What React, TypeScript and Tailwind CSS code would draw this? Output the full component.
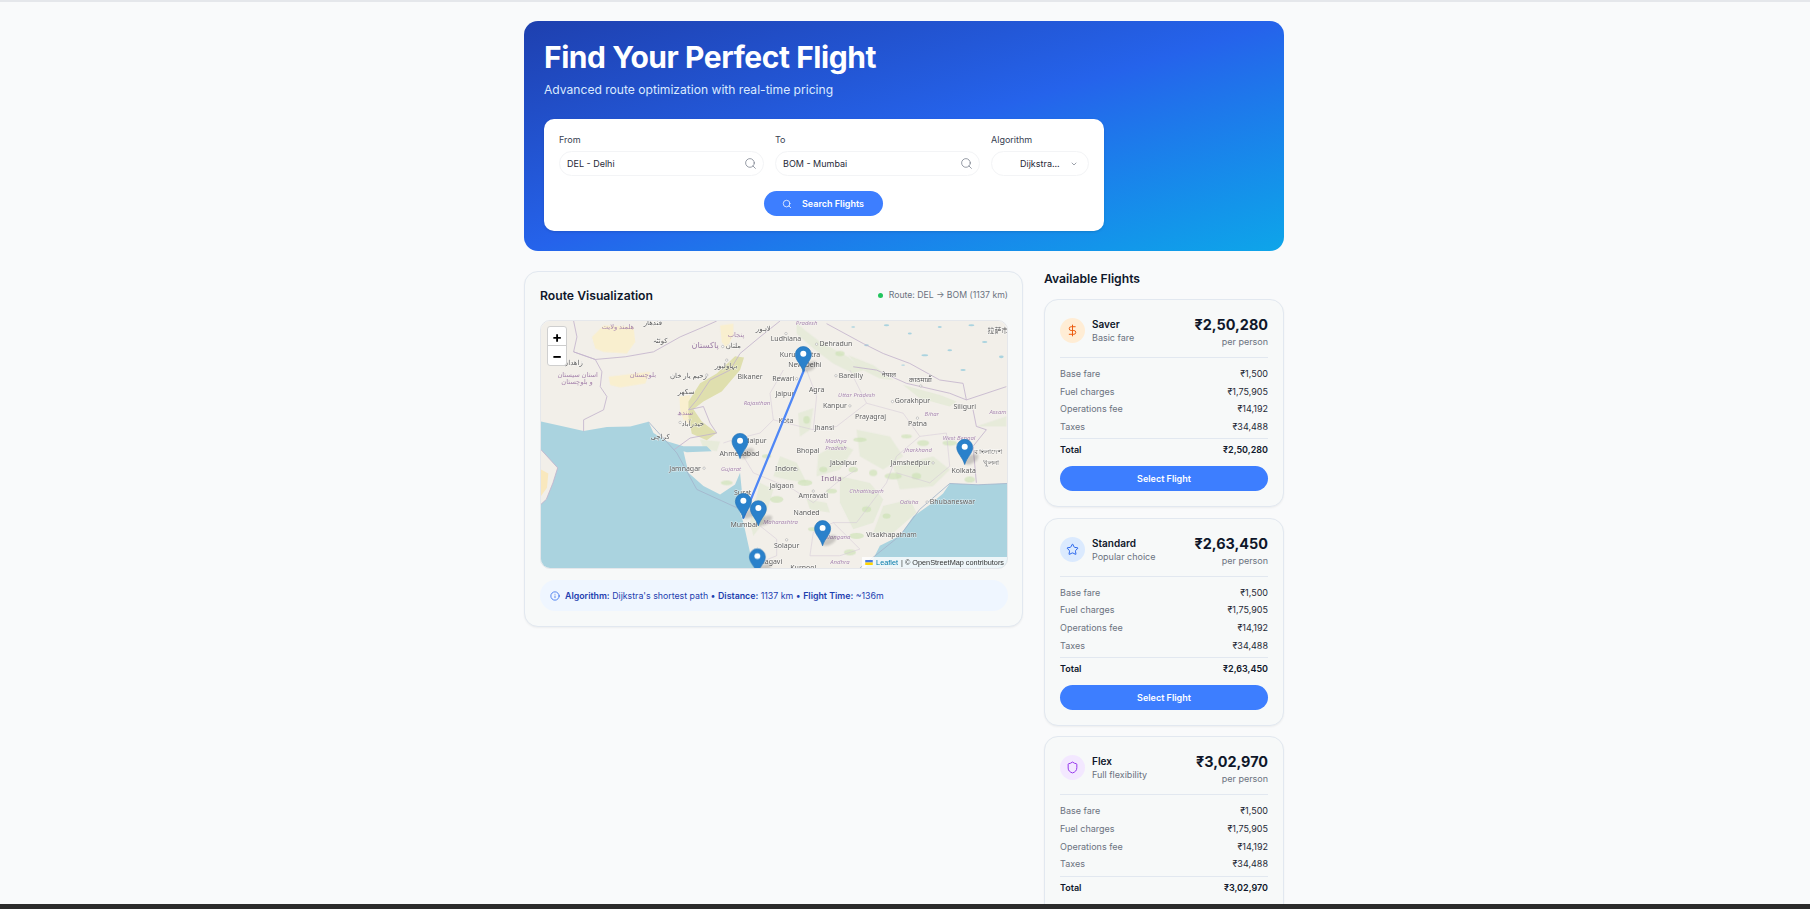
import { ChevronDown, DollarSign, Info, Search, Shield, Star } from "lucide-react";

const fares = [
  { name: "Saver", sub: "Basic fare", price: "₹2,50,280", ops: "₹14,192", taxes: "₹34,488", icon: DollarSign, circle: "bg-[#ffedd5]", color: "text-[#ea580c]" },
  { name: "Standard", sub: "Popular choice", price: "₹2,63,450", ops: "₹14,192", taxes: "₹34,488", icon: Star, circle: "bg-[#dbeafe]", color: "text-[#2563eb]" },
  { name: "Flex", sub: "Full flexibility", price: "₹3,02,970", ops: "₹14,192", taxes: "₹34,488", icon: Shield, circle: "bg-[#f3e8ff]", color: "text-[#9333ea]" },
];

// label coordinates are in the map's viewBox (3 units = 1 screen px)
const cities: [string, number, number][] = [
  ["Ludhiana", 798, 208], ["Dehradun", 948, 222], ["Kurukshetra", 840, 254], ["New Delhi", 855, 286], ["Bikaner", 690, 320],
  ["Rewari", 790, 326], ["Bareilly", 993, 319], ["Agra", 890, 360], ["Jaipur", 795, 373], ["Kanpur", 945, 410],
  ["Gorakhpur", 1178, 395], ["Siliguri", 1335, 412], ["Prayagraj", 1052, 443], ["Patna", 1193, 464], ["Kota", 798, 455],
  ["Jhansi", 913, 476], ["Udaipur", 700, 514], ["Ahmedabad", 658, 555], ["Bhopal", 864, 545], ["Jabalpur", 971, 582],
  ["Jamshedpur", 1172, 582], ["Kolkata", 1332, 605], ["Jamnagar", 495, 598], ["Indore", 798, 600], ["Jalgaon", 785, 649],
  ["Surat", 668, 670], ["Amravati", 880, 681], ["Bhubaneswar", 1298, 698], ["Nanded", 860, 732], ["Mumbai", 672, 767],
  ["Visakhapatnam", 1115, 798], ["Solapur", 800, 830], ["Belagavi", 745, 880], ["Kurnool", 850, 897],
  ["کوئٹہ", 420, 213], ["ملتان", 640, 229], ["بہاولپور", 618, 287], ["زاهدان", 158, 280], ["رحیم یار خان", 505, 318],
  ["سکھر", 498, 368], ["حیدرآباد", 518, 462], ["کراچی", 420, 502], ["لاہور", 730, 177], ["قندهار", 398, 158],
  ["नेपाल", 1107, 315], ["काठमाडौं", 1202, 330], ["拉萨市", 1435, 182], ["বাংলাদেশ", 1405, 548], ["খুলনা", 1415, 580],
];

const regions: [string, number, number][] = [
  ["Rajasthan", 711, 400], ["Uttar Pradesh", 1010, 375], ["Bihar", 1236, 435], ["Assam", 1435, 428], ["West Bengal", 1318, 505],
  ["Jharkhand", 1195, 542], ["Madhya", 948, 514], ["Pradesh", 948, 536], ["Gujarat", 633, 600], ["Chhattisgarh", 1040, 665],
  ["Odisha", 1168, 700], ["Maharashtra", 782, 760], ["Telangana", 950, 805], ["Andhra", 960, 880], ["Pradesh", 860, 158],
];

const regionsNative: [string, number, number][] = [
  ["هلمند ولایت", 293, 170], ["بلوچستان", 368, 315], ["استان سیستان", 172, 315], ["و بلوچستان", 170, 338], ["سندھ", 495, 431], ["پنجاب", 648, 195],
];

const dots = [[798, 190], [890, 222], [948, 317], [830, 326], [990, 408], [1118, 395], [1203, 348], [1193, 445], [1240, 580], [1222, 698], [830, 600], [552, 596], [880, 665], [800, 812], [480, 458], [560, 315], [620, 270], [608, 229], [100, 260]];

const greens = [
  "M830 160 L900 215 L985 260 L1030 300 L1000 310 L940 280 L880 235 L830 190Z",
  "M985 255 L1060 285 L1120 330 L1080 325 L1020 295Z",
  "M1150 345 L1260 375 L1310 395 L1290 410 L1200 385Z",
  "M835 430 L880 415 L870 480 L840 500Z",
  "M895 555 L960 520 L1000 540 L960 600 L890 620Z",
  "M1010 480 L1110 500 L1150 560 L1090 600 L1020 560Z",
  "M960 620 L1050 640 L1090 690 L1060 760 L1000 780 L960 700Z",
  "M1120 590 L1240 560 L1290 600 L1240 650 L1140 660Z",
  "M1090 710 L1170 690 L1190 730 L1120 790 L1060 790Z",
  "M720 640 L760 660 L730 760 L700 800 L690 760Z",
  "M540 510 L600 515 L590 545 L550 535Z",
  "M780 560 L830 580 L860 640 L800 630 L760 620Z",
  "M1370 470 L1460 440 L1460 470 L1400 470Z",
  "M860 690 L920 700 L930 730 L870 720Z",
];

const blobs = [[1120, 620, 26, 10], [1020, 510, 20, 7], [855, 640, 22, 9], [935, 665, 16, 7], [1210, 520, 18, 9], [1290, 520, 22, 8], [770, 690, 20, 10], [1010, 800, 22, 9], [990, 850, 18, 9], [880, 780, 16, 6], [620, 640, 18, 7], [1350, 630, 16, 9], [1160, 500, 16, 6], [740, 560, 14, 6], [1000, 600, 14, 8], [1060, 610, 12, 10], [1190, 620, 14, 10], [1040, 720, 14, 9], [910, 600, 12, 8], [860, 450, 10, 12], [1100, 740, 12, 8], [960, 250, 14, 8]];

const lakes = [[1100, 165, 8, 3], [1170, 190, 6, 3], [1215, 255, 10, 3], [1290, 240, 7, 3], [1355, 165, 9, 3], [1395, 215, 8, 3], [1260, 170, 6, 3], [1445, 260, 7, 4], [1040, 225, 7, 3], [1000, 170, 6, 2], [1150, 285, 6, 2], [1330, 300, 8, 3]];

const pins: [number, number][] = [[660, 567], [850, 305], [1335, 585], [908, 830], [670, 748], [715, 770], [712, 915]];

function MapCanvas() {
  return (
    <svg viewBox="62 152 1400 745" className="block w-full h-full blur-[0.35px]" preserveAspectRatio="none" fontFamily="'Noto Sans','DejaVu Sans','Noto Sans CJK SC',sans-serif">
      <rect x="62" y="152" width="1400" height="745" fill="#f2efe9" />
      {/* desert tints */}
      <g className="blur-[2px]">
        <path d="M215 200 L250 165 L340 170 L345 215 L320 250 L250 245 L225 235Z" fill="#f9efcf" />
        <path d="M265 320 L390 305 L375 340 L300 352 L270 345Z" fill="#f9efcf" />
        <path d="M600 165 L640 160 L640 195 L620 235 L605 215Z" fill="#f9efcf" />
        <path d="M478 380 L510 375 L505 420 L520 470 L490 450 L480 420Z" fill="#f9efcf" />
        {greens.map((d, i) => (
          <path key={i} d={d} fill="#dce8cb" opacity="0.5" />
        ))}
        {blobs.map(([cx, cy, rx, ry], i) => (
          <ellipse key={i} cx={cx} cy={cy} rx={rx} ry={ry} fill="#cde2b6" opacity="0.65" />
        ))}
      </g>
      {/* thar strip */}
      <path d="M505 395 L540 340 L590 310 L645 258 L672 262 L660 300 L605 365 L550 395 L520 418 L545 455 L590 490 L560 512 L515 492 L505 440Z" fill="#dfdfae" />
      {lakes.map(([cx, cy, rx, ry], i) => (
        <ellipse key={i} cx={cx} cy={cy} rx={rx} ry={ry} fill="#aad3df" />
      ))}
      {/* sea */}
      <path
        d="M62 455 L130 470 L190 484 L260 472 L330 470 L385 456 L400 490 L440 515 L490 530 L560 530 L575 545 L500 548 L490 545 L505 610 L550 650 L600 675 L645 645 L660 610 L665 660 L650 700 L670 760 L690 850 L702 897 L62 897Z"
        fill="#aad3df"
      />
      <path d="M62 540 L85 565 L112 595 L98 640 L78 690 L62 705Z" fill="#f2efe9" />
      <path d="M62 600 L84 612 L80 655 L62 680Z" fill="#f9e8bd" />
      <path d="M1462 642 L1375 646 L1290 642 L1270 672 L1230 706 L1180 742 L1140 800 L1080 830 L1060 870 L1035 897 L1462 897Z" fill="#aad3df" />
      {/* country and state borders */}
      <g fill="none" stroke="#c2b3cc" strokeWidth="2.5" strokeLinejoin="round">
        <path d="M160 152 L170 200 L160 245 L225 268 L315 260 L400 245 L480 200 L550 170 L590 152" />
        <path d="M160 245 L225 268 L245 305 L240 350 L260 380 L250 420 L190 450 L190 485" />
        <path d="M780 152 L720 200 L660 250 L630 300 L570 330 L530 390 L505 420 L550 410 L570 460 L590 490 L510 505 L462 540" />
        <path d="M920 160 L1030 220 L1090 250 L1170 280 L1260 330 L1330 340 L1340 390" />
        <path d="M1000 290 L1070 300 L1160 340 L1290 370 L1340 390" />
        <path d="M1340 390 L1460 350 M1360 420 L1370 470 L1400 480 L1360 530 L1370 640" />
        <path d="M385 456 L470 550 L530 660 L650 715" stroke="#a3b4cb" />
        <path d="M62 540 L85 565 L112 595 L98 640 L78 690 L62 705" />
        <path d="M1462 642 L1375 646 L1290 642 L1200 720 L1140 800 L1020 897" stroke="#a3b4cb" />
      </g>
      <g fill="none" stroke="#d3c7d6" strokeWidth="1.5">
        <path d="M790 300 L750 370 L760 450 L720 490 L640 510 L610 520 M760 450 L880 480 L950 470 L1040 400 L1150 430 L1200 500 L1130 560 L1100 640 L1010 760 L940 760 L880 790 L870 860" />
        <path d="M1040 400 L990 300 M860 300 L890 380 L880 480 M640 510 L700 610 L820 660 L880 700 L950 640 L1010 600 M1200 500 L1280 490 L1290 590 L1230 640 L1130 610 M720 770 L770 810 L770 860 L720 880 M940 760 L1020 840 L960 860 L870 860" />
      </g>
      {dots.map(([cx, cy], i) => (
        <circle key={i} cx={cx} cy={cy} r="3.5" fill="#fff" stroke="#9a9a9a" strokeWidth="1.5" />
      ))}
      <g textAnchor="middle" dominantBaseline="middle">
        {cities.map(([t, x, y], i) => (
          <text key={i} x={x} y={y} fontSize="21" fill="#5c5c5c" stroke="#fff" strokeWidth="3" paintOrder="stroke" strokeOpacity="0.6">
            {t}
          </text>
        ))}
        {regions.map(([t, x, y], i) => (
          <text key={i} x={x} y={y} fontSize="18" fontStyle="italic" fill="#a786ae" stroke="#fff" strokeWidth="2" paintOrder="stroke" strokeOpacity="0.5">
            {t}
          </text>
        ))}
        {regionsNative.map(([t, x, y], i) => (
          <text key={i} x={x} y={y} fontSize="20" fill="#a786ae">
            {t}
          </text>
        ))}
        <text x="555" y="227" fontSize="25" fill="#9e7fa8">پاکستان</text>
        <text x="935" y="628" fontSize="24" letterSpacing="1" fill="#8d6f96">India</text>
      </g>
      <line x1="852" y1="300" x2="670" y2="745" stroke="#4f87f6" strokeWidth="7" strokeLinecap="round" />
      {pins.map(([x, y], i) => (
        <g key={i}>
          <ellipse cx={x + 20} cy={y - 16} rx="24" ry="12" fill="#000" opacity="0.17" transform={`rotate(-30 ${x + 20} ${y - 16})`} className="blur-[3px]" />
          <path
            d={`M${x} ${y} C${x - 6} ${y - 22} ${x - 24} ${y - 34} ${x - 24} ${y - 52} A24 24 0 0 1 ${x + 24} ${y - 52} C${x + 24} ${y - 34} ${x + 6} ${y - 22} ${x} ${y}Z`}
            fill="#2a81cb"
            stroke="#2473b6"
            strokeWidth="2"
          />
          <circle cx={x} cy={y - 54} r="9" fill="#fff" />
        </g>
      ))}
    </svg>
  );
}

function FareCard({ fare }: { fare: (typeof fares)[number] }) {
  const Icon = fare.icon;
  const rows = [
    ["Base fare", "₹1,500"],
    ["Fuel charges", "₹1,75,905"],
    ["Operations fee", fare.ops],
    ["Taxes", fare.taxes],
  ];
  return (
    <div className="shrink-0 h-[208px] rounded-[14px] border border-[#e2e8f0] bg-[#f7f9f9] shadow-xs px-[15px] pt-[15px]">
      <div className="flex justify-between h-[42px] border-b border-[#e2e8f0] box-content">
        <div className="flex items-start gap-[7px] pt-[3px]">
          <div className={`w-[25px] h-[25px] rounded-full flex items-center justify-center ${fare.circle}`}>
            <Icon className={`w-[13px] h-[13px] ${fare.color}`} strokeWidth={1.8} />
          </div>
          <div className="-mt-[1px]">
            <div className="text-[10px] leading-[14px] font-semibold text-[#0f172a]">{fare.name}</div>
            <div className="text-[9px] leading-[14px] text-[#6b7280]">{fare.sub}</div>
          </div>
        </div>
        <div className="text-right">
          <div className="text-[14.4px] leading-[20px] font-bold text-[#0f172a]">{fare.price}</div>
          <div className="text-[9px] leading-[13px] text-[#6b7280]">per person</div>
        </div>
      </div>
      <div className="pt-[7px] flex flex-col">
        {rows.map(([label, value]) => (
          <div key={label} className="flex justify-between h-[17.6px] items-center text-[9px]">
            <span className="text-[#6b7280]">{label}</span>
            <span className="text-[#1f2937]">{value}</span>
          </div>
        ))}
      </div>
      <div className="flex justify-between items-center border-t border-[#e2e8f0] mt-[3px] text-[9px] font-semibold text-[#0f172a] h-[22px]">
        <span>Total</span>
        <span>{fare.price}</span>
      </div>
      <button className="mt-[6px] w-full h-[25px] rounded-full bg-[#3d7eff] text-white text-[9px] font-semibold">Select Flight</button>
    </div>
  );
}

export default function App() {
  return (
    <div className="h-screen flex flex-col overflow-hidden bg-[#f9fafb] font-['Inter',sans-serif]">
      <div className="h-[2px] bg-[#e5e7eb] shrink-0" />
      <main className="flex-1 min-h-0 overflow-hidden pr-[2px]">
        <div className="w-[760px] mx-auto pt-[19px]">
          <section className="h-[230px] rounded-[14px] px-[20px] pt-[18px] bg-linear-to-br from-[#1e40af] via-[#2563eb] to-[#0ea5e9]">
            <h1 className="text-[30px] leading-[36px] font-bold text-white tracking-[-0.45px]">Find Your Perfect Flight</h1>
            <p className="mt-[6px] text-[12.1px] leading-[18px] text-[#dbeafe]">Advanced route optimization with real-time pricing</p>
            <div className="mt-[20px] w-[560px] h-[112px] rounded-[10px] bg-white shadow-sm px-[15px] pt-[14px]">
              <div className="grid grid-cols-[205px_205px_98px] gap-[11px]">
                <div>
                  <label className="block text-[9px] leading-[14px] text-[#374151] mb-[4px]">From</label>
                  <div className="h-[25px] rounded-full border border-[#f3f4f6] flex items-center justify-between pl-[7px] pr-[6px] text-[9px] text-[#1f2937]">
                    <span>DEL - Delhi</span>
                    <Search className="w-[13px] h-[13px] text-[#6b7280]" strokeWidth={1.3} />
                  </div>
                </div>
                <div>
                  <label className="block text-[9px] leading-[14px] text-[#374151] mb-[4px]">To</label>
                  <div className="h-[25px] rounded-full border border-[#f3f4f6] flex items-center justify-between pl-[7px] pr-[6px] text-[9px] text-[#1f2937]">
                    <span>BOM - Mumbai</span>
                    <Search className="w-[13px] h-[13px] text-[#6b7280]" strokeWidth={1.3} />
                  </div>
                </div>
                <div>
                  <label className="block text-[9px] leading-[14px] text-[#374151] mb-[4px]">Algorithm</label>
                  <div className="h-[25px] rounded-full border border-[#f3f4f6] flex items-center justify-between pl-[28px] pr-[10px] text-[9px] text-[#1f2937]">
                    <span>Dijkstra...</span>
                    <ChevronDown className="w-[8px] h-[8px] text-[#6b7280]" strokeWidth={2} />
                  </div>
                </div>
              </div>
              <div className="flex justify-center mt-[15px] pr-[2px]">
                <button className="w-[119px] h-[25px] rounded-full bg-[#3d7eff] text-white text-[9px] font-semibold flex items-center justify-center gap-[10px]">
                  <Search className="w-[10px] h-[10px]" strokeWidth={1.8} />
                  Search Flights
                </button>
              </div>
            </div>
          </section>

          <div className="mt-[20px] grid grid-cols-[499px_240px] gap-[21px] items-start">
            <section className="h-[356px] rounded-[14px] border border-[#e2e8f0] bg-[#f7f9f9] shadow-xs pl-[15px] pr-[14px] pt-[14px]">
              <div className="flex justify-between items-center h-[20px]">
                <h2 className="text-[12.2px] font-semibold text-[#0f172a]">Route Visualization</h2>
                <div className="flex items-center gap-[6px] text-[8.7px] text-[#6b7280]">
                  <span className="w-[5px] h-[5px] rounded-full bg-[#22c55e]" />
                  Route: DEL → BOM (1137 km)
                </div>
              </div>
              <div className="relative mt-[14px] h-[249px] rounded-[10px] border border-[#e5e7eb] overflow-hidden">
                <MapCanvas />
                <div className="absolute left-[6px] top-[5px] w-[20px] rounded-[3px] border border-[#cfcfcf] bg-white flex flex-col">
                  <span className="h-[19px] flex items-center justify-center text-[15px] font-bold leading-none text-black border-b border-[#ccc]">+</span>
                  <span className="h-[19px] flex items-center justify-center text-[15px] font-bold leading-none text-black">−</span>
                </div>
                <div className="absolute right-0 bottom-0 h-[11px] pl-[3px] pr-[3px] bg-white/80 flex items-center gap-[3px] text-[7.3px] leading-none text-[#333] font-['Liberation_Sans',sans-serif]">
                  <svg viewBox="0 0 12 8" className="w-[8px] h-[5px]">
                    <rect width="12" height="4" fill="#4c7be1" />
                    <rect y="4" width="12" height="4" fill="#ffd500" />
                  </svg>
                  <span className="text-[#0078a8]">Leaflet</span>
                  <span>| © OpenStreetMap contributors</span>
                </div>
              </div>
              <div className="mt-[11px] h-[31px] rounded-full bg-[#eff6ff] flex items-center gap-[5px] pl-[10px] text-[8.8px] text-[#1e40af]">
                <Info className="w-[10px] h-[10px] text-[#2563eb]" strokeWidth={1.8} />
                <span>
                  <b className="font-semibold">Algorithm:</b> Dijkstra's shortest path • <b className="font-semibold">Distance:</b> 1137 km • <b className="font-semibold">Flight Time:</b> ~136m
                </span>
              </div>
            </section>

            <aside>
              <h2 className="h-[28px] -mt-[1px] mb-[1px] text-[12.2px] leading-[18px] font-semibold text-[#0f172a]">Available Flights</h2>
              <div className="flex flex-col gap-[10.7px]">
                {fares.map((fare) => (
                  <FareCard key={fare.name} fare={fare} />
                ))}
              </div>
            </aside>
          </div>
        </div>
      </main>
      <div className="h-[5px] bg-[#2b2b2b] shrink-0" />
    </div>
  );
}
